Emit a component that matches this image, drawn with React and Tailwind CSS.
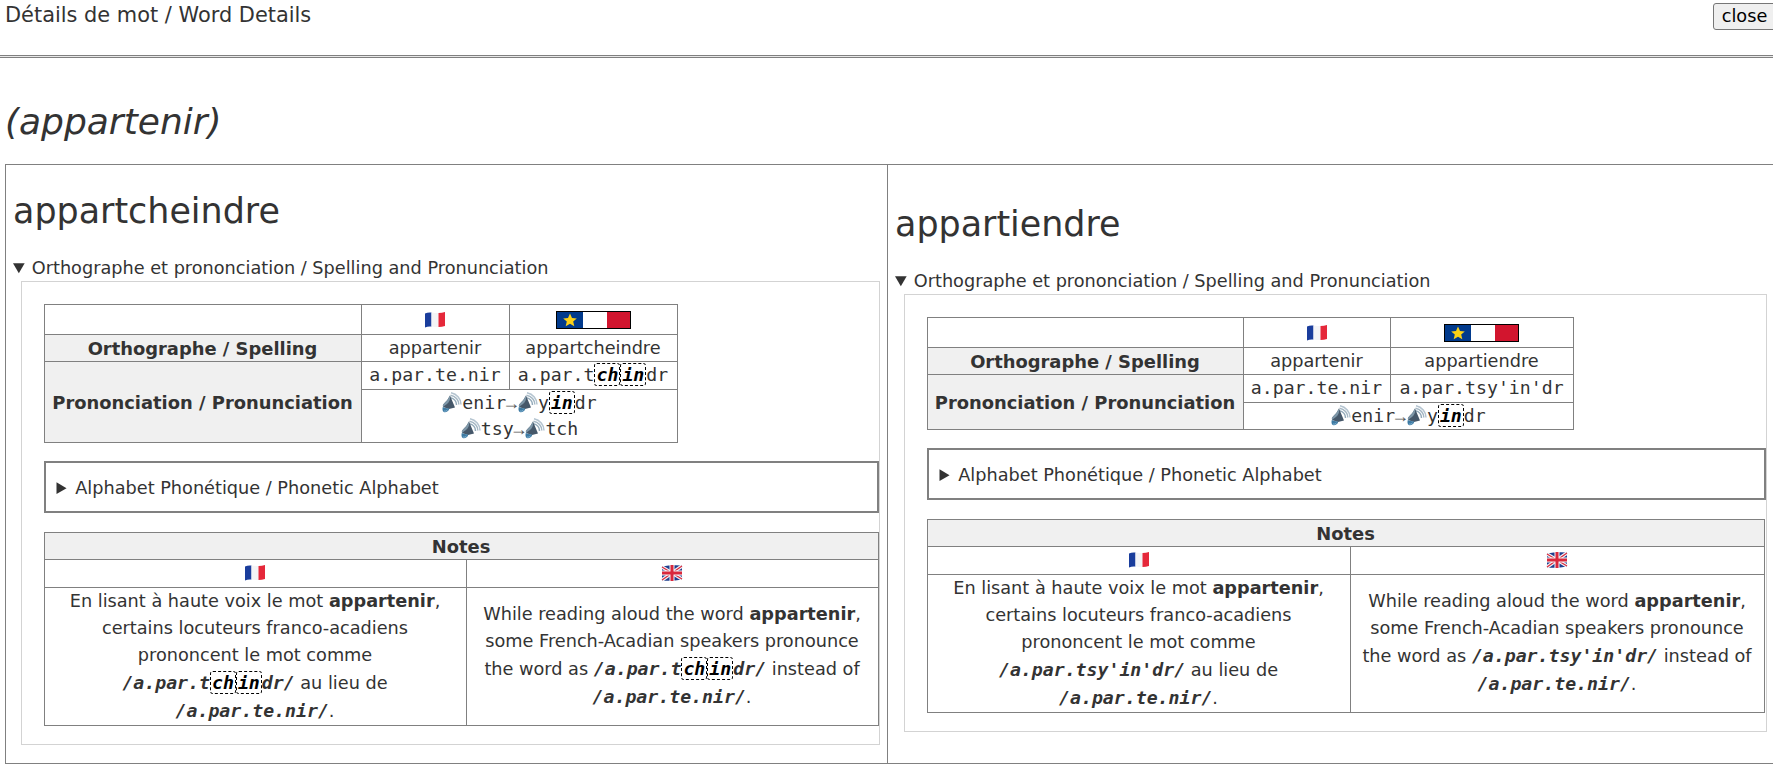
const Speaker = () => (
  <svg width="21" height="21" viewBox="0 0 21 21" className="inline-block align-[-4px]">
    <path d="M10 0.8 C16 2 20 7 20 12.5" fill="none" stroke="#b4c4d0" strokeWidth="1.5" />
    <path d="M9.5 3.2 C14.5 4 17.8 8 17.8 12.5" fill="none" stroke="#a4b7c4" strokeWidth="1.5" />
    <path d="M9.5 5.8 C13 6.5 15.5 9.5 15.5 13" fill="none" stroke="#93aaba" strokeWidth="1.5" />
    <path d="M9 3.5 L14 15.5 L8 17 L2 15 Q1.2 13 3 11.5 Q7 8 9 3.5 Z" fill="#46586a" />
    <path d="M9 3.5 Q10 9 6 12 Q3.5 13.5 2.2 15 Q1.2 13 3 11.5 Q7 8 9 3.5 Z" fill="#7d96a7" />
    <path d="M1.8 15 Q0.8 18.5 2.8 20 Q5.5 20.8 7.5 18.5 Q8.5 17 8 16.5 Q4 16 1.8 15 Z" fill="#3d7aa3" />
    <path d="M3 19 Q5 19.8 6.5 18" fill="none" stroke="#7fb0cf" strokeWidth="1" />
  </svg>
);

const FlagFr = () => (
  <svg width="22" height="18" viewBox="0 0 22 18" className="inline-block align-[-3px]">
    <path d="M1 2.5 Q4 1 7.5 1.5 L7.5 15.5 Q4 15 1 16.5 Z" fill="#1a3d9c" />
    <path d="M7.5 1.5 Q11 2 14.5 2 L14.5 16 Q11 16 7.5 15.5 Z" fill="#f4f4f6" />
    <path d="M14.5 2 Q18 2 21 1 L21 15 Q18 16 14.5 16 Z" fill="#e5283a" />
  </svg>
);

const FlagUk = () => (
  <svg width="22" height="18" viewBox="0 0 22 18" className="inline-block align-[-3px]">
    <path d="M1 2.5 Q11 0.5 21 1.5 L21 15.5 Q11 17.5 1 16.5 Z" fill="#1f3f8f" />
    <path d="M1 3 L21 15 M21 2 L1 16" stroke="#f3f3f5" strokeWidth="3.4" />
    <path d="M1 3 L21 15 M21 2 L1 16" stroke="#d9283c" strokeWidth="1.2" />
    <path d="M11 1 V17 M1 9 H21" stroke="#f3f3f5" strokeWidth="5" />
    <path d="M11 1 V17 M1 9 H21" stroke="#d9283c" strokeWidth="3" />
  </svg>
);

const FlagAc = () => (
  <svg width="75" height="18" viewBox="0 0 75 18" className="inline-block align-[-3px]">
    <rect x="0.5" y="0.5" width="74" height="17" fill="#fff" stroke="#000" />
    <rect x="1" y="1" width="26" height="16" fill="#013a8c" />
    <rect x="51" y="1" width="23" height="16" fill="#d2152e" />
    <path d="M14 2.5 L16 7 L20.8 7.4 L17.2 10.5 L18.3 15.2 L14 12.7 L9.7 15.2 L10.8 10.5 L7.2 7.4 L12 7 Z" fill="#fcd116" />
  </svg>
);

const Mark = ({ children }) => (
  <span className="font-bold italic text-black border border-dashed border-black rounded-[3px] px-px">{children}</span>
);

const Mono = ({ children, className = "" }) => (
  <span className={`font-['DejaVu_Sans_Mono',monospace] text-[18.2px] ${className}`}>{children}</span>
);

const Arrow = () => <span className="font-['Liberation_Mono',monospace] text-[18px] leading-none text-[#555]">→</span>;

const Cell = ({ children, className = "", ...rest }) => (
  <td className={`border border-[#808080] p-0 text-center ${className}`} {...rest}>{children}</td>
);

const Head = ({ children, className = "", ...rest }) => (
  <th className={`border border-[#808080] bg-[#f0f0f0] p-0 font-bold text-center text-[17.9px] whitespace-nowrap ${className}`} {...rest}>{children}</th>
);

function Column({ word, title, ipa, ipaPlain, audio, cols, notesCols, boxClass }) {
  return (
    <div className="pl-[7px] pb-[18px]">
      <h2 className="text-[34.9px] leading-[54px] mt-[19px] mb-[17px] font-normal">{word}</h2>
      <details open>
        <summary className="h-[26px] leading-[26px] cursor-pointer">Orthographe et prononciation / Spelling and Pronunciation</summary>
        <div className={`${boxClass} border-[1.5px] border-[#d3d3d3] pl-[21.5px] pt-[21.5px] pb-[18.5px]`}>
          <table className="border-collapse table-fixed" style={{ width: cols[0] + cols[1] + cols[2] }}>
            <colgroup>
              <col style={{ width: cols[0] }} />
              <col style={{ width: cols[1] }} />
              <col style={{ width: cols[2] }} />
            </colgroup>
            <tbody>
              <tr className="h-[30px]">
                <Cell />
                <Cell className="pt-[2px]"><FlagFr /></Cell>
                <Cell className="pt-[2px]"><FlagAc /></Cell>
              </tr>
              <tr className="h-[27px]">
                <Head className="pt-[1px] leading-[25px]">Orthographe / Spelling</Head>
                <Cell className="pt-[1px] leading-[25px]">appartenir</Cell>
                <Cell className="pt-[1px] leading-[25px]">{title}</Cell>
              </tr>
              <tr className="h-[28px]">
                <Head rowSpan={2} className="pt-[3px]">Prononciation / Pronunciation</Head>
                <Cell><Mono>a.par.te.nir</Mono></Cell>
                <Cell><Mono>{ipa}</Mono></Cell>
              </tr>
              <tr>
                <Cell colSpan={2}>
                  {audio.map((line, i) => (
                    <div key={i} className="leading-[26px]">{line}</div>
                  ))}
                </Cell>
              </tr>
            </tbody>
          </table>
          <details className="mt-[18px] border-2 border-[#808080] h-[52px] px-[11px] pt-[13px]">
            <summary className="leading-[25px] cursor-pointer">Alphabet Phonétique / Phonetic Alphabet</summary>
          </details>
          <table className="mt-[19px] border-collapse table-fixed" style={{ width: notesCols[0] + notesCols[1] }}>
            <colgroup>
              <col style={{ width: notesCols[0] }} />
              <col style={{ width: notesCols[1] }} />
            </colgroup>
            <tbody>
              <tr className="h-[27px]"><Head colSpan={2} className="pt-[1px] leading-[25px]">Notes</Head></tr>
              <tr className="h-[28px]">
                <Cell><FlagFr /></Cell>
                <Cell><FlagUk /></Cell>
              </tr>
              <tr>
                <Cell className="px-[8px] leading-[27px]">
                  En lisant à haute voix le mot <b>appartenir</b>, certains locuteurs franco-acadiens prononcent le mot comme{" "}
                  <Mono className="italic font-bold whitespace-nowrap">/a.par.{ipaPlain}/</Mono>{" "}
                  au lieu de <Mono className="italic font-bold">/a.par.te.nir/</Mono>.
                </Cell>
                <Cell className="px-[8px] leading-[27px]">
                  While reading aloud the word <b>appartenir</b>, some French-Acadian speakers pronounce the word as{" "}
                  <Mono className="italic font-bold whitespace-nowrap">/a.par.{ipaPlain}/</Mono>{" "}
                  instead of <Mono className="italic font-bold">/a.par.te.nir/</Mono>.
                </Cell>
              </tr>
            </tbody>
          </table>
        </div>
      </details>
    </div>
  );
}

export default function App() {
  return (
    <div className="w-[1773px] h-[771px] overflow-hidden bg-white text-[#333] font-['DejaVu_Sans',sans-serif] text-[17.7px] leading-[26.4px]">
      <div className="w-[1778px]">
        <div className="flex justify-between pl-[5px] h-[55px]">
          <span className="text-[20.9px] leading-[30px]">Détails de mot / Word Details</span>
          <button className="h-[27px] mt-[3px] mr-[2px] border border-[#767676] rounded-[3px] bg-[#efefef] text-black text-[17.7px] leading-[25px] w-[63px]">close</button>
        </div>
        <hr className="border-0 border-t border-b border-t-[#808080] border-b-[#808080] h-[3px] bg-[#e8e8e8]" />
        <h1 className="ml-[5px] mt-[37px] h-[69px] text-[36px] leading-[54px] italic font-normal">(appartenir)</h1>
        <table className="ml-[5px] border-collapse table-fixed w-[1770px]">
          <colgroup>
            <col className="w-[882px]" />
            <col className="w-[888px]" />
          </colgroup>
          <tbody>
            <tr>
              <td className="border border-[#808080] p-0 align-middle">
                <Column
                  word="appartcheindre"
                  title="appartcheindre"
                  cols={[317, 148, 168]}
                  notesCols={[422, 412]}
                  boxClass="ml-[8px] mr-[7px]"
                  ipa={<>a.par.t<Mark>ch</Mark><Mark>in</Mark>dr</>}
                  ipaPlain={<>t<Mark>ch</Mark><Mark>in</Mark>dr</>}
                  audio={[
                    <Mono><Speaker />enir<Arrow /><Speaker />y<Mark>in</Mark>dr</Mono>,
                    <Mono><Speaker />tsy<Arrow /><Speaker />tch</Mono>,
                  ]}
                />
              </td>
              <td className="border border-[#808080] p-0 align-middle">
                <Column
                  word="appartiendre"
                  title="appartiendre"
                  cols={[316, 147, 183]}
                  notesCols={[423, 414]}
                  boxClass="ml-[9px] mr-[8px]"
                  ipa="a.par.tsy'in'dr"
                  ipaPlain="tsy'in'dr"
                  audio={[<Mono><Speaker />enir<Arrow /><Speaker />y<Mark>in</Mark>dr</Mono>]}
                />
              </td>
            </tr>
          </tbody>
        </table>
      </div>
    </div>
  );
}
